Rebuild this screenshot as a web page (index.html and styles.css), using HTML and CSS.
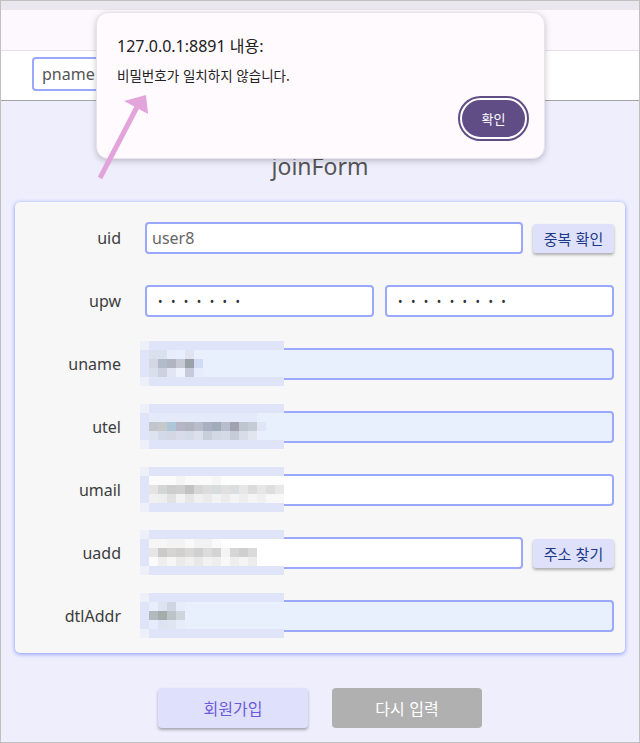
FILE: index.html
```html
<!DOCTYPE html>
<html lang="ko">
<head>
<meta charset="utf-8">
<title>joinForm</title>
<link rel="stylesheet" href="styles.css">
</head>
<body>
<div class="chrome"></div>
<nav class="nav"></nav>
<div class="search"><input class="search-input" type="text" value="pname"></div>
<main class="main">
  <h1 class="title">joinForm</h1>
  <form class="card">
    <label class="lbl">uid</label>
    <div class="fields">
      <input class="inp grow" type="text" value="user8">
      <button class="btn-side" type="button">중복 확인</button>
    </div>

    <label class="lbl">upw</label>
    <div class="fields pw">
      <input class="inp grow pwd" type="password" value="1234567">
      <input class="inp grow pwd" type="password" value="123456789">
    </div>

    <label class="lbl">uname</label>
    <div class="fields">
      <div class="field grow">
        <input class="inp auto" type="text">
        <div class="blur"><div class="blur-in b-auto"><div class="br un1"></div><div class="br un2"></div><div class="br un3"></div></div></div>
      </div>
    </div>

    <label class="lbl">utel</label>
    <div class="fields">
      <div class="field grow">
        <input class="inp auto" type="text">
        <div class="blur"><div class="blur-in b-auto"><div class="br ut1"></div><div class="br ut2"></div><div class="br ut3"></div></div></div>
      </div>
    </div>

    <label class="lbl">umail</label>
    <div class="fields">
      <div class="field grow">
        <input class="inp" type="text">
        <div class="blur"><div class="blur-in b-white"><div class="br um1"></div><div class="br um2"></div><div class="br um3"></div></div></div>
      </div>
    </div>

    <label class="lbl">uadd</label>
    <div class="fields">
      <div class="field grow">
        <input class="inp" type="text">
        <div class="blur"><div class="blur-in b-white"><div class="br ua1"></div><div class="br ua2"></div><div class="br ua3"></div></div></div>
      </div>
      <button class="btn-side" type="button">주소 찾기</button>
    </div>

    <label class="lbl">dtlAddr</label>
    <div class="fields">
      <div class="field grow">
        <input class="inp auto" type="text">
        <div class="blur"><div class="blur-in b-auto"><div class="br ud1"></div><div class="br ud2"></div><div class="br ud3"></div></div></div>
      </div>
    </div>
  </form>
  <div class="actions">
    <button class="btn-join" type="button">회원가입</button>
    <button class="btn-reset" type="button">다시 입력</button>
  </div>
</main>

<div class="dialog">
  <div class="dlg-title">127.0.0.1:8891 내용:</div>
  <div class="dlg-msg">비밀번호가 일치하지 않습니다.</div>
  <div class="dlg-foot"><button class="dlg-ok" type="button">확인</button></div>
</div>

<svg class="arrow" width="640" height="743" viewBox="0 0 640 743" aria-hidden="true">
  <line x1="100" y1="178" x2="137" y2="107" stroke="#e3a4dc" stroke-width="5"/>
  <polygon points="146,95 124,101 148,114" fill="#e3a4dc"/>
</svg>
</body>
</html>
```

FILE: styles.css
```css
* { box-sizing: border-box; }

html, body { margin: 0; padding: 0; }

body {
  width: 640px;
  height: 743px;
  border: 1px solid #c0c0c0;
  background: #eeeefd;
  overflow: hidden;
  position: relative;
  font-family: "Noto Sans", "Noto Sans CJK KR", sans-serif;
  color: #333;
}

.chrome {
  height: 9px;
  background: #ebe7ef;
}

.nav {
  height: 41px;
  background: #fcf8fd;
  border-bottom: 1px solid #e6e0ea;
}

.search {
  height: 50px;
  background: #fff;
  border-bottom: 1px solid #a4a4a4;
  padding: 6px 0 0 31px;
}

.search-input {
  width: 200px;
  height: 34px;
  border: 2px solid #9aa8ff;
  border-radius: 4px;
  padding: 0 8px;
  font: 16px "Noto Sans", sans-serif;
  color: #555;
  outline: none;
}

.main {
  display: flex;
  flex-direction: column;
}

.title {
  margin: 0 0 21px;
  padding-top: 50px;
  height: 80px;
  line-height: 30px;
  text-align: center;
  font-size: 23px;
  font-weight: 400;
  color: #555;
}

.card {
  margin: 0 14px;
  padding: 20px 11px 21px 0;
  background: #f7f7f7;
  border-radius: 5px;
  box-shadow: 0 1px 4px rgba(110, 130, 255, 0.85);
  display: grid;
  grid-template-columns: 106px 1fr;
  column-gap: 24px;
  row-gap: 31px;
}

.lbl {
  text-align: right;
  line-height: 32px;
  font-size: 16px;
  color: #3d3d3d;
}

.fields {
  display: flex;
  gap: 10px;
  align-items: flex-start;
}

.fields.pw { gap: 11px; }

.grow { flex: 1; min-width: 0; }

.field { position: relative; }

.inp {
  display: block;
  width: 100%;
  height: 32px;
  border: 2px solid #9aa8ff;
  border-radius: 4px;
  padding: 0 5px;
  font: 16px "Noto Sans", sans-serif;
  color: #666;
  background: #fff;
  outline: none;
}

.inp.auto { background: #e8effd; }

.inp.pwd {
  font-size: 12px;
  letter-spacing: 8.4px;
  padding-left: 11px;
  color: #333;
}

.btn-side {
  width: 81px;
  height: 29px;
  margin-top: 2px;
  border: none;
  border-radius: 3px;
  background: #dfe1fb;
  color: #1b3a8a;
  font: 15px "Noto Sans CJK KR", sans-serif;
  box-shadow: 0 2px 3px rgba(0, 0, 0, 0.3);
  padding: 0;
}

/* pixelated privacy patches */
.blur {
  position: absolute;
  left: -5px;
  top: -7px;
  width: 144px;
  height: 45px;
  background:
    linear-gradient(#eef0f9 0 9px, #dfe4f8 9px 36px, #eef0f9 36px) 0 0 / 9px 45px no-repeat,
    #dfe4f8;
}

.blur-in {
  position: absolute;
  left: 9px;
  top: 9px;
  width: 135px;
  height: 27px;
}

.b-auto { background: #e8effd; }
.b-white { background: #fff; }

.br { height: 9px; }

.un1 { background: linear-gradient(90deg, #d9e1ef 0 18px, #e6edfb 18px 27px, #e8eefc 27px 36px, #dfe4f0 36px 45px, transparent 45px); }
.un2 { background: linear-gradient(90deg, #d3d7e4 0 9px, #b2bbca 9px 18px, #b1b5c1 18px 27px, #c5cad4 27px 36px, #9ba1a8 36px 45px, #d0dcf5 45px 54px, transparent 54px); }
.un3 { background: linear-gradient(90deg, #dadfee 0 9px, #ccd0df 9px 18px, #e2e6f4 18px 27px, #eff3fd 27px 36px, #c7cadb 36px 45px, #e6ecfb 45px 54px, transparent 54px); }

.ut1 { background: linear-gradient(90deg, #e4eafa 0 108px, transparent 108px); }
.ut2 { background: linear-gradient(90deg, #c3c5cc 0 9px, #c5c9cc 9px 18px, #aec6d8 18px 27px, #b5b5c3 27px 36px, #b2b3c1 36px 45px, #b9bdc9 45px 54px, #a9b0bf 54px 63px, #a2abb9 63px 72px, #b9bdcb 72px 81px, #a0a2af 81px 90px, #bfc5ce 90px 99px, #c6ccd5 99px 108px, #dfe6f8 108px 117px, transparent 117px); }
.ut3 { background: linear-gradient(90deg, #dde3ef 0 9px, #d2d9e7 9px 18px, #d3d7e4 18px 27px, #d8dcea 27px 36px, #d5dbe6 36px 45px, #dbe0ec 45px 54px, #c8cfdb 54px 63px, #d3d8e5 63px 72px, #d5dbe6 72px 81px, #c6ccd8 81px 90px, #d8dce8 90px 99px, #e0e5f0 99px 108px, transparent 108px); }

.um1 { background: linear-gradient(90deg, #fbfbfb 0 27px, #f4f4f4 27px 36px, #fafafa 36px 63px, #f6f6f6 63px 72px, #fdfdfd 72px); }
.um2 { background: linear-gradient(90deg, #e4e4e4 0 9px, #d4d6d6 9px 18px, #cdcdcd 18px 27px, #d0d0d0 27px 36px, #c2c2c2 36px 45px, #d6d6d6 45px 54px, #dcdcdc 54px 63px, #d8dcdc 63px 72px, #e0e0e0 72px 81px, #dadede 81px 90px, #e6e6e6 90px 99px, #dcdcdc 99px 108px, #e6e6e6 108px 117px, #dedede 117px 126px, #e8e8e8 126px); }
.um3 { background: linear-gradient(90deg, #f0f0f0 0 9px, #eeeeee 9px 18px, #e2e2e2 18px 27px, #f2f2f2 27px 36px, #e6e6e6 36px 45px, #f0f0f0 45px 54px, #ebebeb 54px 63px, #f3f3f3 63px 72px, #ececec 72px 81px, #f4f4f4 81px 90px, #eeeeee 90px 99px, #f5f5f5 99px 108px, #f0f0f0 108px 117px, #f8f8f8 117px); }

.ua1 { background: linear-gradient(90deg, #f6f6f6 0 18px, #f3f3f3 18px 36px, #f9f9f9 36px 45px, #f2f2f2 45px 63px, #fafafa 63px 72px, #ffffff 72px); }
.ua2 { background: linear-gradient(90deg, #e6e6e6 0 9px, #cacaca 9px 18px, #d6d3d3 18px 27px, #d2cfcf 27px 36px, #d8d8d8 36px 45px, #d0d0d0 45px 54px, #dcdcdc 54px 63px, #d4d4d4 63px 72px, #f4f4f4 72px 81px, #d6d6d6 81px 90px, #cfcfcf 90px 99px, #dadada 99px 108px, #ffffff 108px); }
.ua3 { background: linear-gradient(90deg, #fafafa 0 9px, #eeeeee 9px 18px, #f6f6f6 18px 27px, #eaeaea 27px 36px, #f0f0f0 36px 45px, #e8e8e8 45px 54px, #f2f2f2 54px 63px, #eeeeee 63px 72px, #f8f8f8 72px 81px, #eeeeee 81px 90px, #f4f4f4 90px 99px, #ececec 99px 108px, #ffffff 108px); }

.ud1 { background: linear-gradient(90deg, #e8eefc 0 9px, #dde3f0 9px 18px, #cfd6e2 18px 27px, #e6ecfa 27px 36px, transparent 36px); }
.ud2 { background: linear-gradient(90deg, #b3b9be 0 9px, #a5adaa 9px 18px, #bcc4ca 18px 27px, #d0d5dd 27px 36px, transparent 36px); }
.ud3 { background: linear-gradient(90deg, #e6ecfb 0 9px, #dde3f0 9px 18px, #dfe5f1 18px 27px, #e6ecfa 27px 36px, transparent 36px); }

.actions {
  display: flex;
  justify-content: center;
  gap: 24px;
  margin-top: 35px;
}

.btn-join,
.btn-reset {
  width: 150px;
  height: 40px;
  border: none;
  border-radius: 4px;
  font: 16px "Noto Sans CJK KR", sans-serif;
  padding: 0;
}

.btn-join {
  background: #dee0fc;
  color: #6e5ad8;
  box-shadow: 0 2px 3px rgba(0, 0, 0, 0.3);
}

.btn-reset {
  background: #b0b0b0;
  color: #fff;
}

/* alert dialog */
.dialog {
  position: absolute;
  left: 95px;
  top: 11px;
  width: 449px;
  height: 147px;
  background: #fffafe;
  border: 1px solid #e9e2ec;
  border-radius: 12px;
  box-shadow: 0 2px 6px rgba(0, 0, 0, 0.22);
  padding: 22px 17px 0 20px;
  display: flex;
  flex-direction: column;
}

.dlg-title {
  font: 16px "Noto Sans", "Noto Sans CJK KR", sans-serif;
  color: #202020;
  line-height: 22px;
}

.dlg-msg {
  margin-top: 8px;
  font: 13.5px "Noto Sans CJK KR", sans-serif;
  color: #222;
  line-height: 20px;
}

.dlg-foot {
  display: flex;
  justify-content: flex-end;
  margin-top: 13px;
}

.dlg-ok {
  width: 67px;
  height: 41px;
  border: 2px solid #fff;
  outline: 2px solid #614d86;
  border-radius: 22px;
  background: #614d86;
  color: #fff;
  font: 13px "Noto Sans CJK KR", sans-serif;
  padding: 0;
}

.arrow {
  position: absolute;
  left: -1px;
  top: -1px;
  pointer-events: none;
}
```
